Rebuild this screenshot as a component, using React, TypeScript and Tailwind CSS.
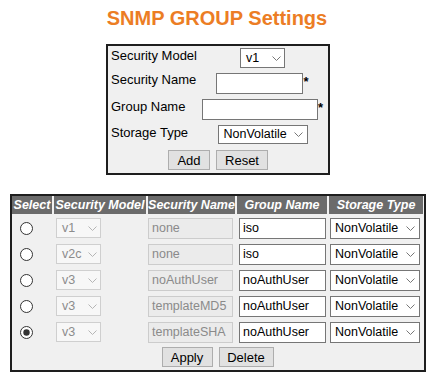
import React from "react";

function Chevron({ color }: { color: string }) {
  return (
    <svg width="9" height="5" viewBox="0 0 9 5" className="shrink-0">
      <polyline points="0.5,0.5 4.5,4.5 8.5,0.5" fill="none" stroke={color} strokeWidth="1" />
    </svg>
  );
}

function Sel({ value, cls, disabled }: { value: string; cls: string; disabled?: boolean }) {
  return (
    <div
      className={
        "flex items-center justify-between border text-[12.5px] leading-none " +
        (disabled ? "border-[#cfcfcf] bg-[#f7f7f7] text-[#8c8c8c] " : "border-[#767676] bg-white text-black ") +
        cls
      }
    >
      <span>{value}</span>
      <Chevron color={disabled ? "#b5b5b5" : "#777777"} />
    </div>
  );
}

function Inp({ value, cls, disabled }: { value?: string; cls: string; disabled?: boolean }) {
  return (
    <div
      className={
        "flex items-center pl-[3px] pt-[1px] border text-[12.5px] leading-none " +
        (disabled ? "border-[#cccccc] bg-[#ebebeb] text-[#8a8a8a] " : "border-[#767676] bg-white text-black ") +
        cls
      }
    >
      {value}
    </div>
  );
}

function Btn({ label, cls }: { label: string; cls: string }) {
  return (
    <div
      className={
        "flex items-center justify-center h-[20px] border border-[#adadad] bg-[#e1e1e1] text-[13px] text-black leading-none " +
        cls
      }
    >
      {label}
    </div>
  );
}

function Radio({ checked }: { checked?: boolean }) {
  return (
    <svg width="13" height="13" viewBox="0 0 13 13">
      <circle cx="6.5" cy="6.5" r="6" fill="white" stroke="#333333" strokeWidth="1" />
      {checked && <circle cx="6.5" cy="6.5" r="3.2" fill="#333333" />}
    </svg>
  );
}

const rows = [
  { model: "v1", sec: "none", grp: "iso", checked: false },
  { model: "v2c", sec: "none", grp: "iso", checked: false },
  { model: "v3", sec: "noAuthUser", grp: "noAuthUser", checked: false },
  { model: "v3", sec: "templateMD5", grp: "noAuthUser", checked: false },
  { model: "v3", sec: "templateSHA", grp: "noAuthUser", checked: true },
];

export default function App() {
  return (
    <div className="w-[432px] h-[384px] bg-white font-['Liberation_Sans',Arial,sans-serif] text-black">
      <div className="pt-[6px] h-[44px]">
        <div className="text-center text-[20px] leading-[24px] font-bold text-[#ec7d24] pl-[2px]">
          SNMP GROUP Settings
        </div>
      </div>

      {/* top form */}
      <div className="ml-[106px] w-[224px] border-2 border-[#1e1e1e] bg-[#f0f0f0] pt-[2px] pb-[3px] text-[13px] leading-[15px]">
        <div className="flex items-start h-[24px]">
          <div className="w-[89px] pl-[3px] whitespace-nowrap">Security Model</div>
          <div className="w-[131px] flex justify-center">
            <Sel value="v1" cls="w-[45px] h-[20px] pl-[5px] pr-[3px]" />
          </div>
        </div>
        <div className="flex items-start h-[27px]">
          <div className="w-[89px] pl-[3px] whitespace-nowrap">Security Name</div>
          <div className="w-[131px] flex justify-center items-start mt-[1px]">
            <Inp cls="w-[87px] h-[21px]" />
            <span className="font-bold text-[13px] leading-[13px] mt-[2px]">*</span>
          </div>
        </div>
        <div className="flex items-start h-[26px]">
          <div className="w-[89px] pl-[3px] whitespace-nowrap">Group Name</div>
          <div className="w-[131px] flex justify-center items-start">
            <Inp cls="w-[116px] h-[21px]" />
            <span className="font-bold text-[13px] leading-[13px] mt-[2px]">*</span>
          </div>
        </div>
        <div className="flex items-start h-[25px]">
          <div className="w-[89px] pl-[3px] whitespace-nowrap">Storage Type</div>
          <div className="w-[131px] flex justify-center">
            <Sel value="NonVolatile" cls="w-[90px] h-[19px] pl-[5px] pr-[4px]" />
          </div>
        </div>
        <div className="flex justify-center gap-[6px]">
          <Btn label="Add" cls="w-[42px]" />
          <Btn label="Reset" cls="w-[52px]" />
        </div>
      </div>

      {/* table */}
      <div className="ml-[10px] mt-[19px] w-[416px] border-2 border-[#1e1e1e] bg-[#f0f0f0] pr-[1px]">
        <div className="flex gap-[2px] h-[18px] text-[12.5px] font-bold italic text-white leading-[18px]">
          <div className="w-[40px] bg-[#6b6b6b] text-center">Select</div>
          <div className="w-[92px] bg-[#6b6b6b] text-center whitespace-nowrap">Security Model</div>
          <div className="w-[87px] bg-[#6b6b6b] text-center whitespace-nowrap">Security Name</div>
          <div className="w-[90px] bg-[#6b6b6b] text-center whitespace-nowrap">Group Name</div>
          <div className="w-[94px] bg-[#6b6b6b] text-center whitespace-nowrap">Storage Type</div>
        </div>
        <div className="flex flex-col gap-[2px] mt-[2px]">
          {rows.map((r, i) => (
            <div key={i} className="flex gap-[2px] h-[24px] items-center">
              <div className="w-[40px] pl-[8px] flex items-center">
                <Radio checked={r.checked} />
              </div>
              <div className="w-[92px] pl-[2px]">
                <Sel value={r.model} cls="w-[45px] h-[20px] pl-[5px] pr-[3px]" disabled />
              </div>
              <div className="w-[87px]">
                <Inp value={r.sec} cls="w-[85px] h-[21px]" disabled />
              </div>
              <div className="w-[90px] pl-[2px]">
                <Inp value={r.grp} cls="w-[87px] h-[21px]" />
              </div>
              <div className="w-[94px] pl-[1px]">
                <Sel value="NonVolatile" cls="w-[90px] h-[21px] pl-[4px] pr-[4px]" />
              </div>
            </div>
          ))}
        </div>
        <div className="flex justify-center gap-[6px] h-[26px] items-center">
          <Btn label="Apply" cls="w-[51px]" />
          <Btn label="Delete" cls="w-[55px]" />
        </div>
      </div>
    </div>
  );
}
